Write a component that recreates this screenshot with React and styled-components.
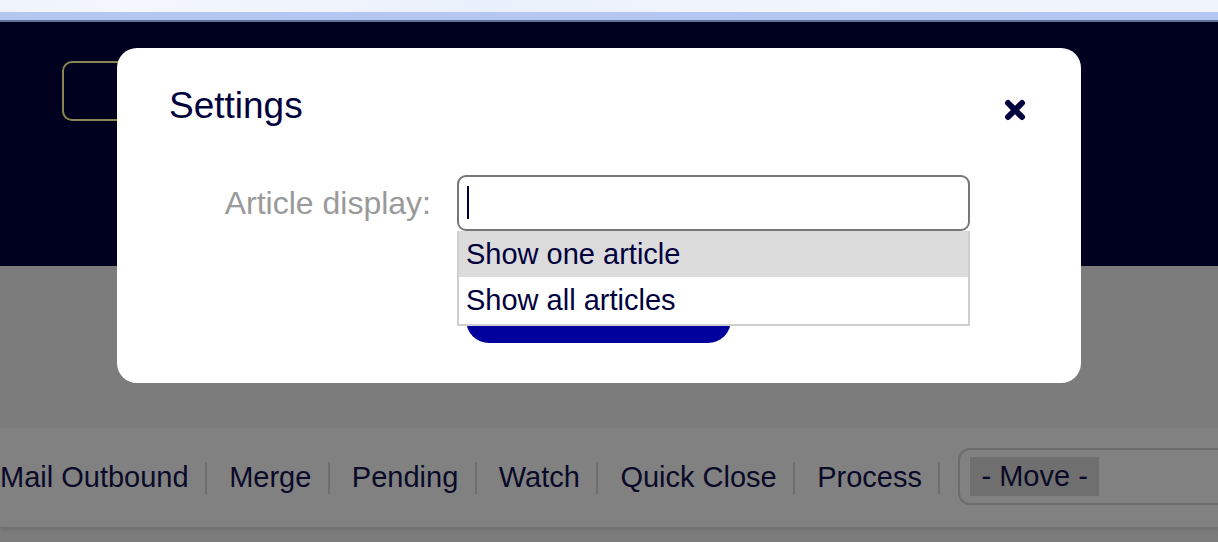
import React from "react";
import styled, { createGlobalStyle } from "styled-components";

const Global = createGlobalStyle`
  html, body {
    margin: 0;
    padding: 0;
    background: #7c7c7c;
    font-family: "Liberation Sans", Arial, Helvetica, sans-serif;
    overflow: hidden;
  }
`;

const Page = styled.div`
  position: relative;
  width: 1218px;
  height: 542px;
  overflow: hidden;
`;

const BrowserStrip = styled.div`
  height: 12px;
  background: linear-gradient(90deg, #eef3fb 0%, #f4f7fd 10%, #eaf0fb 40%, #f2f6fd 70%, #eef3fc 100%);
`;

const BrowserBand = styled.div`
  height: 8px;
  background: #b3c7f0;
  border-bottom: 2px solid #5f7299;
`;

const Header = styled.div`
  height: 244px;
  background: #00001f;
  padding: 39px 0 0 62px;
  box-sizing: border-box;
`;

const GhostButton = styled.div`
  width: 140px;
  height: 60px;
  box-sizing: border-box;
  border: 2px solid #8a8450;
  border-radius: 10px;
`;

const Body = styled.div`
  height: 276px;
  background: #7c7c7c;
  padding-top: 162px;
  box-sizing: border-box;
`;

const Toolbar = styled.div`
  display: flex;
  align-items: center;
  height: 99px;
  background: #818181;
  box-shadow: 0 3px 4px rgba(0, 0, 0, 0.12);
  white-space: nowrap;
`;

const Action = styled.span`
  font-size: 29px;
  color: #0a0a28;
  line-height: 1;
`;

const Sep = styled.span`
  width: 2px;
  height: 32px;
  background: #6e6e6e;
  margin: 0 22px 0 16.5px;
  flex: none;
`;

const MoveSelect = styled.div`
  display: flex;
  align-items: center;
  height: 57px;
  width: 300px;
  margin: -3px 0 0 -4px;
  box-sizing: border-box;
  border: 2px solid #6c6c6c;
  border-radius: 12px;
  padding-left: 10px;
  flex: none;
`;

const MoveOption = styled.span`
  background: #6f6f6f;
  color: #0a0a28;
  font-size: 29px;
  line-height: 39px;
  padding: 0 11px;
`;

const Modal = styled.div`
  position: absolute;
  left: 117px;
  top: 48px;
  width: 964px;
  height: 335px;
  box-sizing: border-box;
  background: #fff;
  border-radius: 20px;
  padding: 37px 52px 0 52px;
`;

const TitleRow = styled.div`
  display: flex;
  justify-content: space-between;
  align-items: center;
`;

const Title = styled.h2`
  margin: 0;
  font-weight: normal;
  font-size: 37px;
  color: #00003c;
`;

const Close = styled.button`
  border: 0;
  background: none;
  padding: 0;
  margin: 8px 3px 0 0;
  width: 22px;
  height: 22px;
  display: flex;
`;

const FormRow = styled.div`
  display: grid;
  grid-template-columns: 262px 513px;
  column-gap: 26px;
  align-items: center;
  margin-top: 48px;
`;

const Label = styled.label`
  text-align: right;
  font-size: 32px;
  color: #9a9a9a;
`;

const Field = styled.div`
  position: relative;
`;

const Input = styled.div`
  height: 56px;
  box-sizing: border-box;
  border: 2px solid #777;
  border-radius: 9px;
  padding: 9px 0 0 8px;
`;

const Caret = styled.span`
  display: block;
  width: 2px;
  height: 33px;
  background: #00003a;
`;

const Menu = styled.ul`
  position: absolute;
  left: 0;
  right: 0;
  top: 56px;
  margin: 0;
  padding: 0;
  list-style: none;
  background: #fff;
  border: 2px solid #cfcfcf;
  border-top: 0;
  z-index: 2;
`;

const Option = styled.li`
  height: ${(p) => (p.$first ? 46 : 47)}px;
  line-height: ${(p) => (p.$first ? 46 : 47)}px;
  padding-left: 7px;
  font-size: 29px;
  color: #00003c;
  background: ${(p) => (p.$active ? "#dcdcdc" : "#fff")};
`;

const SaveButton = styled.div`
  width: 265px;
  height: 46px;
  margin: 66px 0 0 297px;
  background: #00009c;
  border-radius: 23px;
`;

const actions = ["Mail Outbound", "Merge", "Pending", "Watch", "Quick Close", "Process"];

export default function App() {
  return (
    <Page>
      <Global />
      <BrowserStrip />
      <BrowserBand />
      <Header>
        <GhostButton />
      </Header>
      <Body>
        <Toolbar>
          {actions.map((a) => (
            <React.Fragment key={a}>
              <Action>{a}</Action>
              <Sep />
            </React.Fragment>
          ))}
          <MoveSelect>
            <MoveOption>- Move -</MoveOption>
          </MoveSelect>
        </Toolbar>
      </Body>

      <Modal>
        <TitleRow>
          <Title>Settings</Title>
          <Close aria-label="Close">
            <svg width="22" height="22" viewBox="0 0 22 22">
              <path d="M4 4 L18 18 M18 4 L4 18" stroke="#00003c" strokeWidth="6" strokeLinecap="round" />
            </svg>
          </Close>
        </TitleRow>
        <FormRow>
          <Label>Article display:</Label>
          <Field>
            <Input>
              <Caret />
            </Input>
            <Menu>
              <Option $first $active>Show one article</Option>
              <Option>Show all articles</Option>
            </Menu>
          </Field>
        </FormRow>
        <SaveButton />
      </Modal>
    </Page>
  );
}
